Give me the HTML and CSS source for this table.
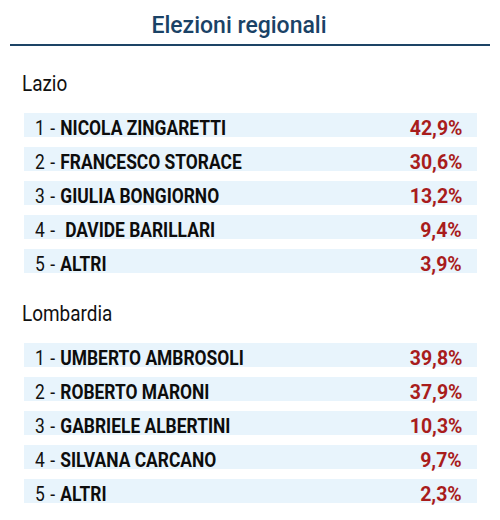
FILE: index.html
```html
<!DOCTYPE html>
<html>
<head>
<meta charset="utf-8">
<link rel="stylesheet" href="styles.css">
</head>
<body>
<div class="page">
  <h1 class="title">Elezioni regionali</h1>
  <section class="region">
    <h2 class="region-name"><span class="cond">Lazio</span></h2>
    <ul class="results">
      <li class="row"><span class="cand"><span class="num">1 - </span><b>NICOLA ZINGARETTI</b></span><span class="pct">42,9%</span></li>
      <li class="row"><span class="cand"><span class="num">2 - </span><b>FRANCESCO STORACE</b></span><span class="pct">30,6%</span></li>
      <li class="row"><span class="cand"><span class="num">3 - </span><b>GIULIA BONGIORNO</b></span><span class="pct">13,2%</span></li>
      <li class="row"><span class="cand"><span class="num">4 - &nbsp;</span><b>DAVIDE BARILLARI</b></span><span class="pct">9,4%</span></li>
      <li class="row"><span class="cand"><span class="num">5 - </span><b>ALTRI</b></span><span class="pct">3,9%</span></li>
    </ul>
  </section>
  <section class="region">
    <h2 class="region-name"><span class="cond">Lombardia</span></h2>
    <ul class="results">
      <li class="row"><span class="cand"><span class="num">1 - </span><b>UMBERTO AMBROSOLI</b></span><span class="pct">39,8%</span></li>
      <li class="row"><span class="cand"><span class="num">2 - </span><b>ROBERTO MARONI</b></span><span class="pct">37,9%</span></li>
      <li class="row"><span class="cand"><span class="num">3 - </span><b>GABRIELE ALBERTINI</b></span><span class="pct">10,3%</span></li>
      <li class="row"><span class="cand"><span class="num">4 - </span><b>SILVANA CARCANO</b></span><span class="pct">9,7%</span></li>
      <li class="row"><span class="cand"><span class="num">5 - </span><b>ALTRI</b></span><span class="pct">2,3%</span></li>
    </ul>
  </section>
</div>
</body>
</html>
```
FILE: styles.css
```css
* { box-sizing: border-box; }
html, body { margin: 0; padding: 0; background: #fff; }
body {
  font-family: "Roboto", "Liberation Sans", sans-serif;
  color: #111;
}
.page {
  width: 500px;
  height: 520px;
  padding: 0 10px;
}
.title {
  margin: 0;
  height: 46px;
  padding: 12px 22px 0 0;
  border-bottom: 2px solid #1d4466;
  text-align: center;
  font-weight: 500;
  font-size: 23px;
  line-height: 28px;
  color: #1a4266;
}
.region-name {
  margin: 0;
  padding-left: 12px;
  font-weight: 400;
  font-size: 22px;
  line-height: 26px;
  color: #111;
}
.cond {
  display: inline-block;
  transform: scaleX(0.86);
  transform-origin: left center;
}
.region:first-of-type .region-name { margin-top: 25px; }
.region + .region .region-name { margin-top: 28px; }
.results {
  list-style: none;
  margin: 16px 0 0 14px;
  padding: 0;
  width: 453px;
  display: flex;
  flex-direction: column;
  gap: 10px;
}
.row {
  height: 24px;
  background: #e8f4fc;
  display: flex;
  align-items: flex-start;
  justify-content: space-between;
  padding: 3px 15px 0 11px;
  font-size: 20px;
  line-height: 24px;
}
.cand {
  display: inline-block;
  white-space: pre;
  transform: scaleX(0.87);
  transform-origin: left center;
}
.num { font-weight: 400; letter-spacing: 0.6px; }
.cand b { font-weight: 700; color: #0d0d0d; }
.pct {
  display: inline-block;
  font-weight: 700;
  font-size: 20.5px;
  color: #a81c1c;
  transform: scaleX(0.95);
  transform-origin: right center;
}
```
